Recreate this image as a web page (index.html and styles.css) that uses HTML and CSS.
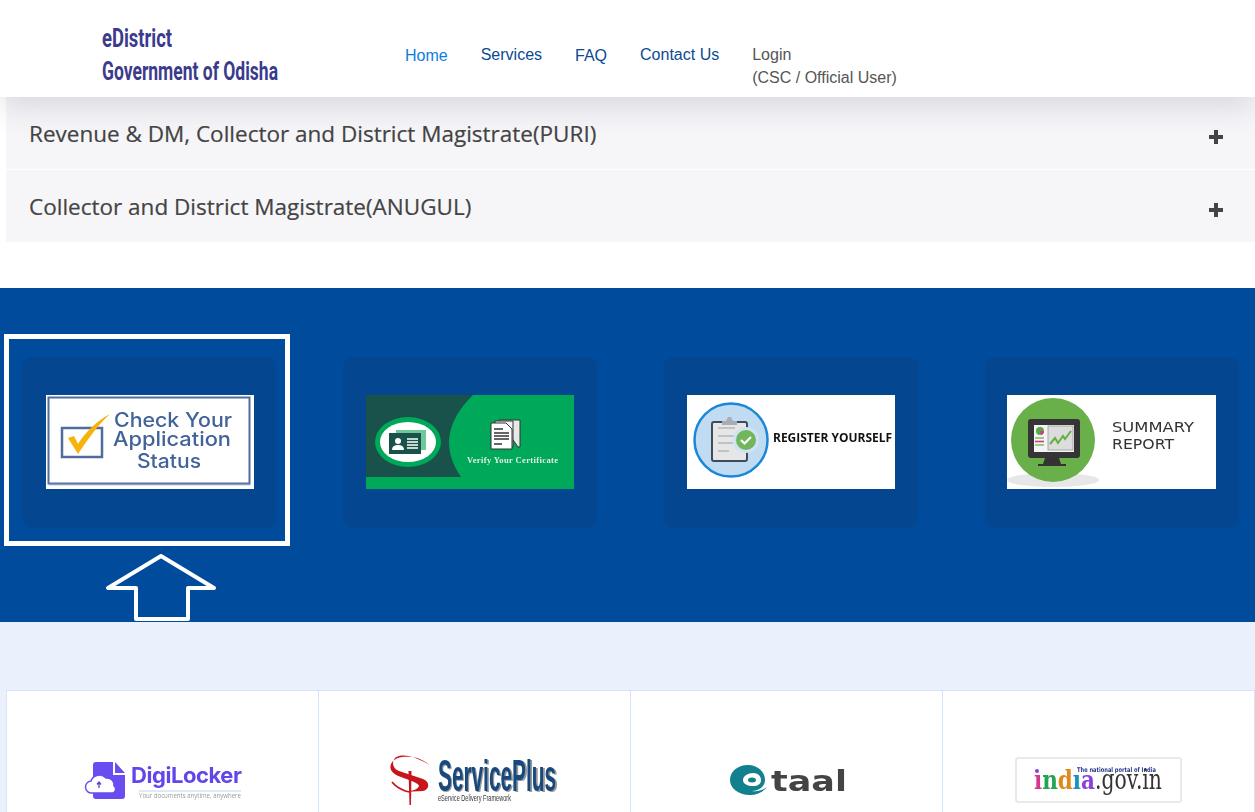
FILE: index.html
```html
<!DOCTYPE html>
<html lang="en">
<head>
    <meta charset="UTF-8">
    <meta name="viewport" content="width=device-width, initial-scale=1.0">
    <title>eDistrict Government of Odisha</title>
    <link rel="stylesheet" href="styles.css">
</head>
<body>
<div class="page">

    <header class="site-header">
        <a class="brand" href="#">
            <svg width="290" height="70" viewBox="0 0 290 70">
                <text class="brand-text" x="2" y="29" textLength="70" lengthAdjust="spacingAndGlyphs">eDistrict</text>
                <text class="brand-text" x="2" y="62" textLength="176" lengthAdjust="spacingAndGlyphs">Government of Odisha</text>
            </svg>
        </a>
        <nav class="main-nav">
            <a class="nav-link active" href="#">Home</a>
            <a class="nav-link raised" href="#">Services</a>
            <a class="nav-link" href="#">FAQ</a>
            <a class="nav-link raised" href="#">Contact Us</a>
            <a class="nav-link login" href="#">Login<br>(CSC / Official User)</a>
        </nav>
    </header>

    <section class="accordion">
        <div class="acc-row">
            <h3 class="acc-title">Revenue &amp; DM, Collector and District Magistrate(PURI)</h3>
            <svg class="acc-plus" width="14" height="14" viewBox="0 0 14 14"><path d="M5 0h4v5h5v4H9v5H5V9H0V5h5z"/></svg>
        </div>
        <div class="acc-row">
            <h3 class="acc-title">Collector and District Magistrate(ANUGUL)</h3>
            <svg class="acc-plus" width="14" height="14" viewBox="0 0 14 14"><path d="M5 0h4v5h5v4H9v5H5V9H0V5h5z"/></svg>
        </div>
    </section>

    <section class="quick-links">
        <div class="tile">
            <svg class="tile-img" width="208" height="94" viewBox="0 0 208 94">
                <rect width="208" height="94" fill="#fff"/>
                <rect x="2.500" y="2.500" width="201" height="86" fill="#fff" stroke="#4f6d9c" stroke-width="2"/>
                <path d="M3 89.500h201" stroke="#8b9db8" stroke-width="1.500"/>
                <rect x="16" y="33" width="40" height="29" fill="#fff" stroke="#4f6d9c" stroke-width="2.500"/>
                <path d="M22 43l6-2 4 8C40 36 52 25 64 19 52 30 42 44 32 59z" fill="#f5b30c"/>
                <text class="check-text" x="127" y="32" textLength="118" lengthAdjust="spacingAndGlyphs">Check Your</text>
                <text class="check-text" x="126" y="51" textLength="118" lengthAdjust="spacingAndGlyphs">Application</text>
                <text class="check-text" x="123" y="73" textLength="64" lengthAdjust="spacingAndGlyphs">Status</text>
            </svg>
        </div>
        <div class="tile">
            <svg class="tile-img" width="208" height="94" viewBox="0 0 208 94">
                <rect width="208" height="94" fill="#00a859"/>
                <path d="M0 0H107Q66 40 95 82H0z" fill="#19524a"/>
                <ellipse cx="42" cy="47" rx="33" ry="25" fill="#00a859"/>
                <ellipse cx="42" cy="47" rx="28" ry="20" fill="#fff"/>
                <rect x="30" y="35" width="30" height="20" fill="#6fc79a"/>
                <rect x="23" y="38" width="32" height="21" fill="#19524a"/>
                <circle cx="32" cy="46" r="3" fill="#fff"/>
                <path d="M26 55q0-5 6-5t6 5z" fill="#fff"/>
                <path d="M41 44h11M41 47h11M41 50h11M41 53h11" stroke="#fff" stroke-width="1.400"/>
                <path d="M133 25h21v27h-2z" fill="#e8e8e8" stroke="#333"/>
                <path d="M129 26h18v26h-18z" fill="#f2f2f2" stroke="#333"/>
                <path d="M125 28h15l6 6v20h-21z" fill="#fff" stroke="#333"/>
                <path d="M128 34h9M128 38h15M128 41h15M128 44h15M128 49h8" stroke="#333" stroke-width="1.500"/>
                <text class="verify-text" x="101" y="68" textLength="91" lengthAdjust="spacing">Verify Your Certificate</text>
            </svg>
        </div>
        <div class="tile">
            <svg class="tile-img" width="208" height="94" viewBox="0 0 208 94">
                <rect width="208" height="94" fill="#fff"/>
                <circle cx="44" cy="45" r="36.500" fill="#c1dcf2" stroke="#1a87d9" stroke-width="2.500"/>
                <rect x="25" y="27" width="35" height="39" rx="2" fill="#e6e6e6" stroke="#3d4b5c" stroke-width="2"/>
                <path d="M35 30v-4h4l2-4h3l2 4h4v4z" fill="#a8adb3"/>
                <path d="M31 33h17M31 41h17M31 48h15M31 56h11" stroke="#bfc3c4" stroke-width="2.200"/>
                <circle cx="59" cy="45" r="13" fill="#cfe3f2"/>
                <circle cx="59" cy="45" r="10" fill="#71b55c"/>
                <path d="M54 45l3.500 3.500 6.500-6.500" fill="none" stroke="#fff" stroke-width="2.200"/>
                <text class="register-text" x="86" y="47" textLength="119" lengthAdjust="spacingAndGlyphs">REGISTER YOURSELF</text>
            </svg>
        </div>
        <div class="tile">
            <svg class="tile-img" width="209" height="94" viewBox="0 0 209 94">
                <rect width="209" height="94" fill="#fff"/>
                <ellipse cx="46" cy="85" rx="46" ry="7" fill="#e6e7e6"/>
                <circle cx="46" cy="45" r="42" fill="#69b04b"/>
                <path d="M38 63h14l2 6h5v2H31v-2h5z" fill="#333"/>
                <rect x="21" y="24" width="52" height="39" rx="3" fill="#353535"/>
                <rect x="27" y="30" width="40" height="27" fill="#f4f4f4"/>
                <rect x="41" y="31" width="25" height="24" fill="#dcdcdc" stroke="#999" stroke-width=".8"/>
                <circle cx="33" cy="36" r="4" fill="#59a84a"/>
                <path d="M33 36h4a4 4 0 0 1-3 4z" fill="#d9358f"/>
                <path d="M28 43h9M28 50h9" stroke="#7cc05c" stroke-width="1.600"/>
                <path d="M28 46.500h9" stroke="#d9358f" stroke-width="1.600"/>
                <path d="M43 49l5-6 3 5 5-7 2 3 6-8" fill="none" stroke="#63b03d" stroke-width="2"/>
                <text class="summary-text" x="105" y="37" textLength="82" lengthAdjust="spacingAndGlyphs">SUMMARY</text>
                <text class="summary-text" x="105" y="54" textLength="62" lengthAdjust="spacingAndGlyphs">REPORT</text>
            </svg>
        </div>
        <div class="highlight-box"></div>
        <svg class="highlight-arrow" width="112" height="70" viewBox="0 0 112 70">
            <path d="M56 3L3 35H31V66H83V35H109z" fill="none" stroke="#fff" stroke-width="4" stroke-linejoin="round"/>
        </svg>
    </section>

    <section class="partners">
        <div class="partner-grid">
            <div class="partner">
                <svg width="312" height="122" viewBox="0 0 312 122">
                    <g transform="translate(-7 -691)">
                        <path d="M96 762h17v13h12v21a3 3 0 0 1-3 3H96a3 3 0 0 1-3-3V765a3 3 0 0 1 3-3z" fill="#6a4df0"/>
                        <path d="M115 762l10 11h-10z" fill="#6a4df0"/>
                        <path d="M92 793a6 6 0 0 1-1-12 9 9 0 0 1 15-3 7 7 0 0 1 8 8 4 4 0 0 1-1 7z" fill="#fff" stroke="#6a4df0" stroke-width="1.500"/>
                        <path d="M99 788v-5M97 784.500l2-2.500 2 2.500" fill="none" stroke="#5a3fd8" stroke-width="1.300"/>
                        <text class="digi-text" x="131" y="783" textLength="111" lengthAdjust="spacing">DigiLocker</text>
                        <path d="M139 791h102" stroke="#b9d7ee" stroke-width="1"/>
                        <text class="digi-tag" x="139" y="798" textLength="102" lengthAdjust="spacingAndGlyphs">Your documents anytime, anywhere</text>
                    </g>
                </svg>
            </div>
            <div class="partner">
                <svg width="312" height="122" viewBox="0 0 312 122">
                    <g transform="translate(-319 -691)">
                        <g transform="translate(3 0)">
                            <path d="M427 765c-10-5-21-11-31-9-8 2-8 12 0 15l24 8c7 3 7 10 0 12l-20 1c7-1 15-2 16-6 0-3-10-6-18-9-9-3-12-8-10-13 3-7 13-8 21-7 8 1 12 4 18 8z" fill="#c8141b"/>
                            <path d="M389 782c4 5 9 8 17 10" fill="none" stroke="#c8141b" stroke-width="1.800"/>
                            <path d="M405.500 771l3 0-.5 34h-1.500z" fill="#c8141b"/>
                        </g>
                        <text class="sp-shadow" x="439" y="792" textLength="119" lengthAdjust="spacingAndGlyphs">ServicePlus</text>
                        <text class="sp-text" x="438" y="791" textLength="118" lengthAdjust="spacingAndGlyphs">ServicePlus</text>
                        <text class="sp-sub" x="438" y="801" textLength="73" lengthAdjust="spacingAndGlyphs">eService Delivery Framework</text>
                    </g>
                </svg>
            </div>
            <div class="partner">
                <svg width="312" height="122" viewBox="0 0 312 122">
                    <g transform="translate(-631 -691)">
                        <path fill-rule="evenodd" d="M748 765c-11 0-18 7-18 15s8 15 20 15c7 0 13-3 17-8-4 3-9 5-15 4 6 0 13-4 13-11 0-8-7-15-17-15zm5 8c5 0 8 3 8 7s-3 6-8 6-10-2-10-6 5-7 10-7z" fill="#13808f"/>
                        <ellipse cx="752" cy="780" rx="4" ry="2.500" fill="#13808f"/>
                        <text class="taal-text" x="771" y="791" textLength="76" lengthAdjust="spacingAndGlyphs">taal</text>
                    </g>
                </svg>
            </div>
            <div class="partner">
                <svg width="312" height="122" viewBox="0 0 312 122">
                    <g transform="translate(-943 -691)">
                        <rect x="1016" y="758" width="165" height="44" rx="2" fill="#fff" stroke="#e4e4e4" stroke-width="1.500"/>
                        <text class="india-tag" x="1077" y="772" textLength="79" lengthAdjust="spacingAndGlyphs">The national portal of India</text>
                        <circle cx="1037" cy="771" r="2" fill="#8a3fe0"/>
                        <text class="india-name" x="1034" y="789" textLength="61" lengthAdjust="spacingAndGlyphs"><tspan fill="#d9358f">ı</tspan><tspan fill="#23a455">n</tspan><tspan fill="#e08a1e">d</tspan><tspan fill="#1b8fc0">ı</tspan><tspan fill="#8a3fe0">a</tspan></text>
                        <text class="india-domain" x="1095" y="789" textLength="67" lengthAdjust="spacingAndGlyphs">.gov.in</text>
                    </g>
                </svg>
            </div>
        </div>
    </section>

</div>
</body>
</html>
```

FILE: styles.css
```css
html, body {
    margin: 0;
    padding: 0;
    background-color: #fff;
}
.page {
    height: 812px;
    overflow: hidden;
    font-family: "Liberation Sans", Arial, sans-serif;
}

/* header */
.site-header {
    position: relative;
    z-index: 2;
    display: flex;
    height: 97px;
    background-color: #fff;
    box-shadow: 0 8px 30px rgba(60, 64, 90, 0.18);
}
.brand {
    display: block;
    width: 405px;
    padding: 18px 0 0 100px;
    box-sizing: border-box;
}
.brand-text {
    font-family: Roboto, sans-serif;
    font-weight: 700;
    font-size: 25px;
    fill: #3b3b8e;
}
.main-nav {
    display: flex;
    align-items: flex-start;
    gap: 33px;
    padding-top: 44px;
    font-size: 16px;
    line-height: 23px;
}
.nav-link {
    color: #0b4a94;
    text-decoration: none;
}
.nav-link.active {
    color: #0a7de3;
}
.nav-link.raised {
    margin-top: -1px;
}
.nav-link.login {
    margin-top: -1px;
    color: #555;
}

/* accordion */
.accordion {
    margin-left: 6px;
}
.acc-row {
    display: flex;
    align-items: center;
    justify-content: space-between;
    height: 72px;
    padding: 0 32px 0 23px;
    background-color: #f6f6f9;
}
.acc-row:first-child {
    border-bottom: 1px solid #fff;
}
.acc-title {
    margin: 0;
    font-family: "Open Sans", sans-serif;
    font-size: 22.500px;
    font-weight: 400;
    color: #444;
    -webkit-text-stroke: 0.2px #444;
}
.acc-plus {
    fill: #444;
    margin-top: 8px;
}

/* blue band */
.quick-links {
    position: relative;
    display: flex;
    gap: 67px;
    height: 334px;
    margin-top: 46px;
    padding: 69px 0 0 22px;
    box-sizing: border-box;
    background-color: #004b9b;
}
.tile {
    flex: none;
    width: 254px;
    height: 171px;
    padding: 38px 0 0 23px;
    box-sizing: border-box;
    border-radius: 10px;
    background-color: #04468f;
}
.tile:first-child {
    padding-left: 24px;
}
.tile:nth-child(4) {
    padding-left: 22px;
}
.tile-img {
    display: block;
    filter: blur(0.3px);
}
.highlight-box {
    position: absolute;
    left: 4px;
    top: 46px;
    width: 286px;
    height: 212px;
    box-sizing: border-box;
    border: 5px solid #fff;
}
.highlight-arrow {
    position: absolute;
    left: 105px;
    top: 265px;
}
.check-text {
    font-family: Inter, sans-serif;
    font-size: 20px;
    font-weight: 500;
    fill: #41639a;
    text-anchor: middle;
}
.verify-text {
    font-family: "Liberation Serif", serif;
    font-size: 8.500px;
    font-weight: 700;
    fill: #e3f1e4;
}
.register-text {
    font-family: "Open Sans", sans-serif;
    font-size: 12px;
    font-weight: 700;
    fill: #111;
}
.summary-text {
    font-family: "DejaVu Sans", sans-serif;
    font-size: 14px;
    fill: #333;
}

/* partner logos */
.partners {
    height: 190px;
    padding: 68px 0 0 6px;
    box-sizing: border-box;
    background-color: #eaf1fd;
}
.partner-grid {
    display: grid;
    grid-template-columns: repeat(4, 312px);
    background-color: #fff;
    border-top: 1px solid #d4e5f8;
    border-left: 1px solid #d4e5f8;
    height: 122px;
}
.partner {
    border-right: 1px solid #d4e5f8;
    height: 122px;
    box-sizing: border-box;
}
.partner svg {
    display: block;
    overflow: visible;
    filter: blur(0.3px);
}
.digi-text {
    font-family: Inter, sans-serif;
    font-size: 22px;
    font-weight: 700;
    fill: #6246ea;
}
.digi-tag {
    font-family: "Open Sans", sans-serif;
    font-size: 7.500px;
    fill: #999;
}
.sp-text, .sp-shadow {
    font-family: "Liberation Sans", sans-serif;
    font-size: 44px;
    font-weight: 700;
}
.sp-text {
    fill: #17497f;
}
.sp-shadow {
    fill: #999;
}
.sp-sub {
    font-family: "Liberation Sans", sans-serif;
    font-size: 9px;
    fill: #333;
}
.taal-text {
    font-family: "DejaVu Sans", sans-serif;
    font-size: 28px;
    font-weight: 700;
    fill: #444;
}
.india-tag {
    font-family: "DejaVu Sans", sans-serif;
    font-size: 6.500px;
    font-weight: 700;
    fill: #2a3a8a;
}
.india-name {
    font-family: "DejaVu Serif", serif;
    font-size: 26px;
    font-weight: 700;
}
.india-domain {
    font-family: "DejaVu Serif", serif;
    font-size: 27px;
    fill: #333;
}
```
